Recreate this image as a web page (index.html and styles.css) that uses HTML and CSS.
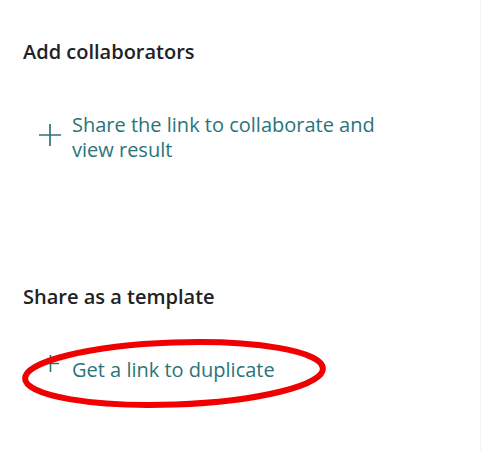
FILE: index.html
```html
<!DOCTYPE html>
<html lang="en">
<head>
    <meta charset="UTF-8">
    <meta name="viewport" content="width=device-width, initial-scale=1.0">
    <title>Share</title>
    <link rel="stylesheet" href="styles.css">
</head>
<body>
    <div class="panel">
        <div class="section">
            <h2>Add collaborators</h2>
            <a class="share-link" href="#">
                <span class="icon icon-large">
                    <svg viewBox="0 0 22 22" width="22" height="22">
                        <path d="M11 0V22M0 11H22" stroke="currentColor" stroke-width="1.7" fill="none"/>
                    </svg>
                </span>
                <span class="label">Share the link to collaborate and view result</span>
            </a>
        </div>

        <div class="section template">
            <h2>Share as a template</h2>
            <a class="share-link" href="#">
                <span class="icon icon-small">
                    <svg viewBox="0 0 17 17" width="17" height="17">
                        <path d="M8.5 0V17M0 8.5H17" stroke="currentColor" stroke-width="1.6" fill="none"/>
                    </svg>
                </span>
                <span class="label">Get a link to duplicate</span>
            </a>
        </div>

        <!-- red marker drawn over the template link -->
        <svg class="marker" viewBox="0 0 481 451" width="481" height="451">
            <ellipse cx="174" cy="373.5" rx="149" ry="31" transform="rotate(-2 174 373.5)"
                     fill="none" stroke="#f00000" stroke-width="6"/>
        </svg>
    </div>
</body>
</html>
```

FILE: styles.css
```css
body {
    margin: 0;
    font-family: "Segoe UI", "Open Sans", "Noto Sans", sans-serif;
    background: #fff;
}
.panel {
    position: relative;
    height: 451px;
    box-sizing: border-box;
    padding: 40px 0 0 23px;
    border-right: 1px solid #f2f2f2;
}
h2 {
    margin: 0;
    font-size: 20px;
    line-height: 24px;
    font-weight: 600;
    color: #222;
}
.share-link {
    display: flex;
    align-items: flex-start;
    gap: 11px;
    margin: 48px 0 0 16px;
    color: #2a7479;
    text-decoration: none;
    font-size: 20px;
    line-height: 25px;
}
.label {
    max-width: 330px;
}
.icon {
    flex: none;
    display: flex;
    justify-content: center;
    width: 22px;
}
.icon-large {
    margin-top: 12px;
}
.icon-small {
    margin-top: -2px;
}
.template {
    margin-top: 123px;
}
.marker {
    position: absolute;
    top: 0;
    left: 0;
    pointer-events: none;
}
```
